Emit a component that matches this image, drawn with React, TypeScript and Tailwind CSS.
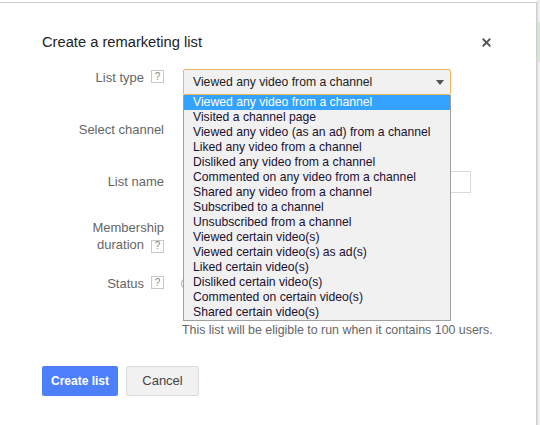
import { X } from "lucide-react"

const options = [
  "Viewed any video from a channel",
  "Visited a channel page",
  "Viewed any video (as an ad) from a channel",
  "Liked any video from a channel",
  "Disliked any video from a channel",
  "Commented on any video from a channel",
  "Shared any video from a channel",
  "Subscribed to a channel",
  "Unsubscribed from a channel",
  "Viewed certain video(s)",
  "Viewed certain video(s) as ad(s)",
  "Liked certain video(s)",
  "Disliked certain video(s)",
  "Commented on certain video(s)",
  "Shared certain video(s)",
]

function Help() {
  return (
    <span className="inline-flex items-center justify-center w-[13px] h-[13px] border border-[#c8c8c8] text-[10px] leading-none text-[#888] ml-[7px] bg-white">
      ?
    </span>
  )
}

function Label({ children, help, className = "" }: { children: React.ReactNode; help?: boolean; className?: string }) {
  return (
    <div className={`w-[122px] shrink-0 flex justify-end items-start text-right text-[13px] leading-[15px] text-[#666] ${className}`}>
      <span>{children}</span>
      {help && <Help />}
    </div>
  )
}

export default function App() {
  return (
    <div
      className="w-[540px] h-[425px] bg-white flex overflow-hidden"
      style={{ fontFamily: '"Liberation Sans", Arial, sans-serif' }}
    >
      <div className="relative w-[537px] h-[423px] mt-[2px] bg-white border-t border-r border-[#cfcfcf]">
        <button className="absolute top-[33px] right-[43px] text-[#555]">
          <X className="w-[13px] h-[13px]" strokeWidth={3.4} />
        </button>

        <div className="pl-[42px] pt-[30px]">
          <h1 className="text-[14.7px] leading-[18px] text-[#222]">Create a remarketing list</h1>

          {/* list type */}
          <div className="flex gap-[19px] mt-[18px]">
            <Label help className="pt-[1px]">List type</Label>
            <div className="relative w-[268px]">
              <div className="h-[26px] flex items-center justify-between pl-[9px] pr-[6px] bg-[#f1f1f1] border border-[#eeb562] rounded-[2px] text-[12.2px] text-[#222]">
                <span>Viewed any video from a channel</span>
                <span className="w-0 h-0 border-l-[4px] border-r-[4px] border-t-[5px] border-l-transparent border-r-transparent border-t-[#555]" />
              </div>
              <ul className="absolute z-10 left-0 top-[26px] w-[268px] bg-[#f1f1f1] border border-t-0 border-[#a0a0a0] text-[12.2px] leading-[15px] text-[#1b1030]">
                {options.map((o, i) => (
                  <li key={i} className={`pl-[9px] h-[15px] ${i === 0 ? "bg-[#33a3ff] text-white" : ""}`}>
                    {o}
                  </li>
                ))}
              </ul>
            </div>
          </div>

          {/* select channel */}
          <div className="flex gap-[19px] mt-[27px] h-[30px]">
            <Label>Select channel</Label>
            <div className="w-[120px] h-[26px]" />
          </div>

          {/* list name */}
          <div className="flex gap-[19px] mt-[19px]">
            <Label className="pt-[3px]">List name</Label>
            <div className="w-[288px] h-[22px] border border-[#d9d9d9] bg-white" />
          </div>

          {/* membership */}
          <div className="flex gap-[19px] mt-[26px]">
            <Label className="leading-[17px]">
              Membership
              <br />
              duration
              <Help />
            </Label>
            <div className="w-[80px] h-[22px]" />
          </div>

          {/* status */}
          <div className="flex gap-[19px] mt-[23px]">
            <Label help className="pt-0">Status</Label>
            <div className="flex flex-col">
              <div className="flex items-center h-[15px] -ml-[2px]">
                <span className="w-[13px] h-[13px] rounded-full border border-[#aaa] bg-white" />
              </div>
              <div className="h-[32px]" />
              <p className="text-[12.4px] leading-[14px] text-[#666] -ml-px">
                This list will be eligible to run when it contains 100 users.
              </p>
            </div>
          </div>

          <div className="flex gap-[8px] mt-[29px]">
            <button className="w-[76px] h-[30px] rounded-[2px] bg-[#4d7ffb] text-white text-[12px] font-bold">
              Create list
            </button>
            <button className="w-[73px] h-[30px] rounded-[2px] bg-[#f1f1f1] border border-[#dcdcdc] text-[#444] text-[13px]">
              Cancel
            </button>
          </div>
        </div>
      </div>
      <div className="flex-1 bg-[#eeeeee] pt-[22px] border-l border-[#dedede]">
        <div className="h-[40px] bg-[#cfe6d0]" />
      </div>
    </div>
  )
}
